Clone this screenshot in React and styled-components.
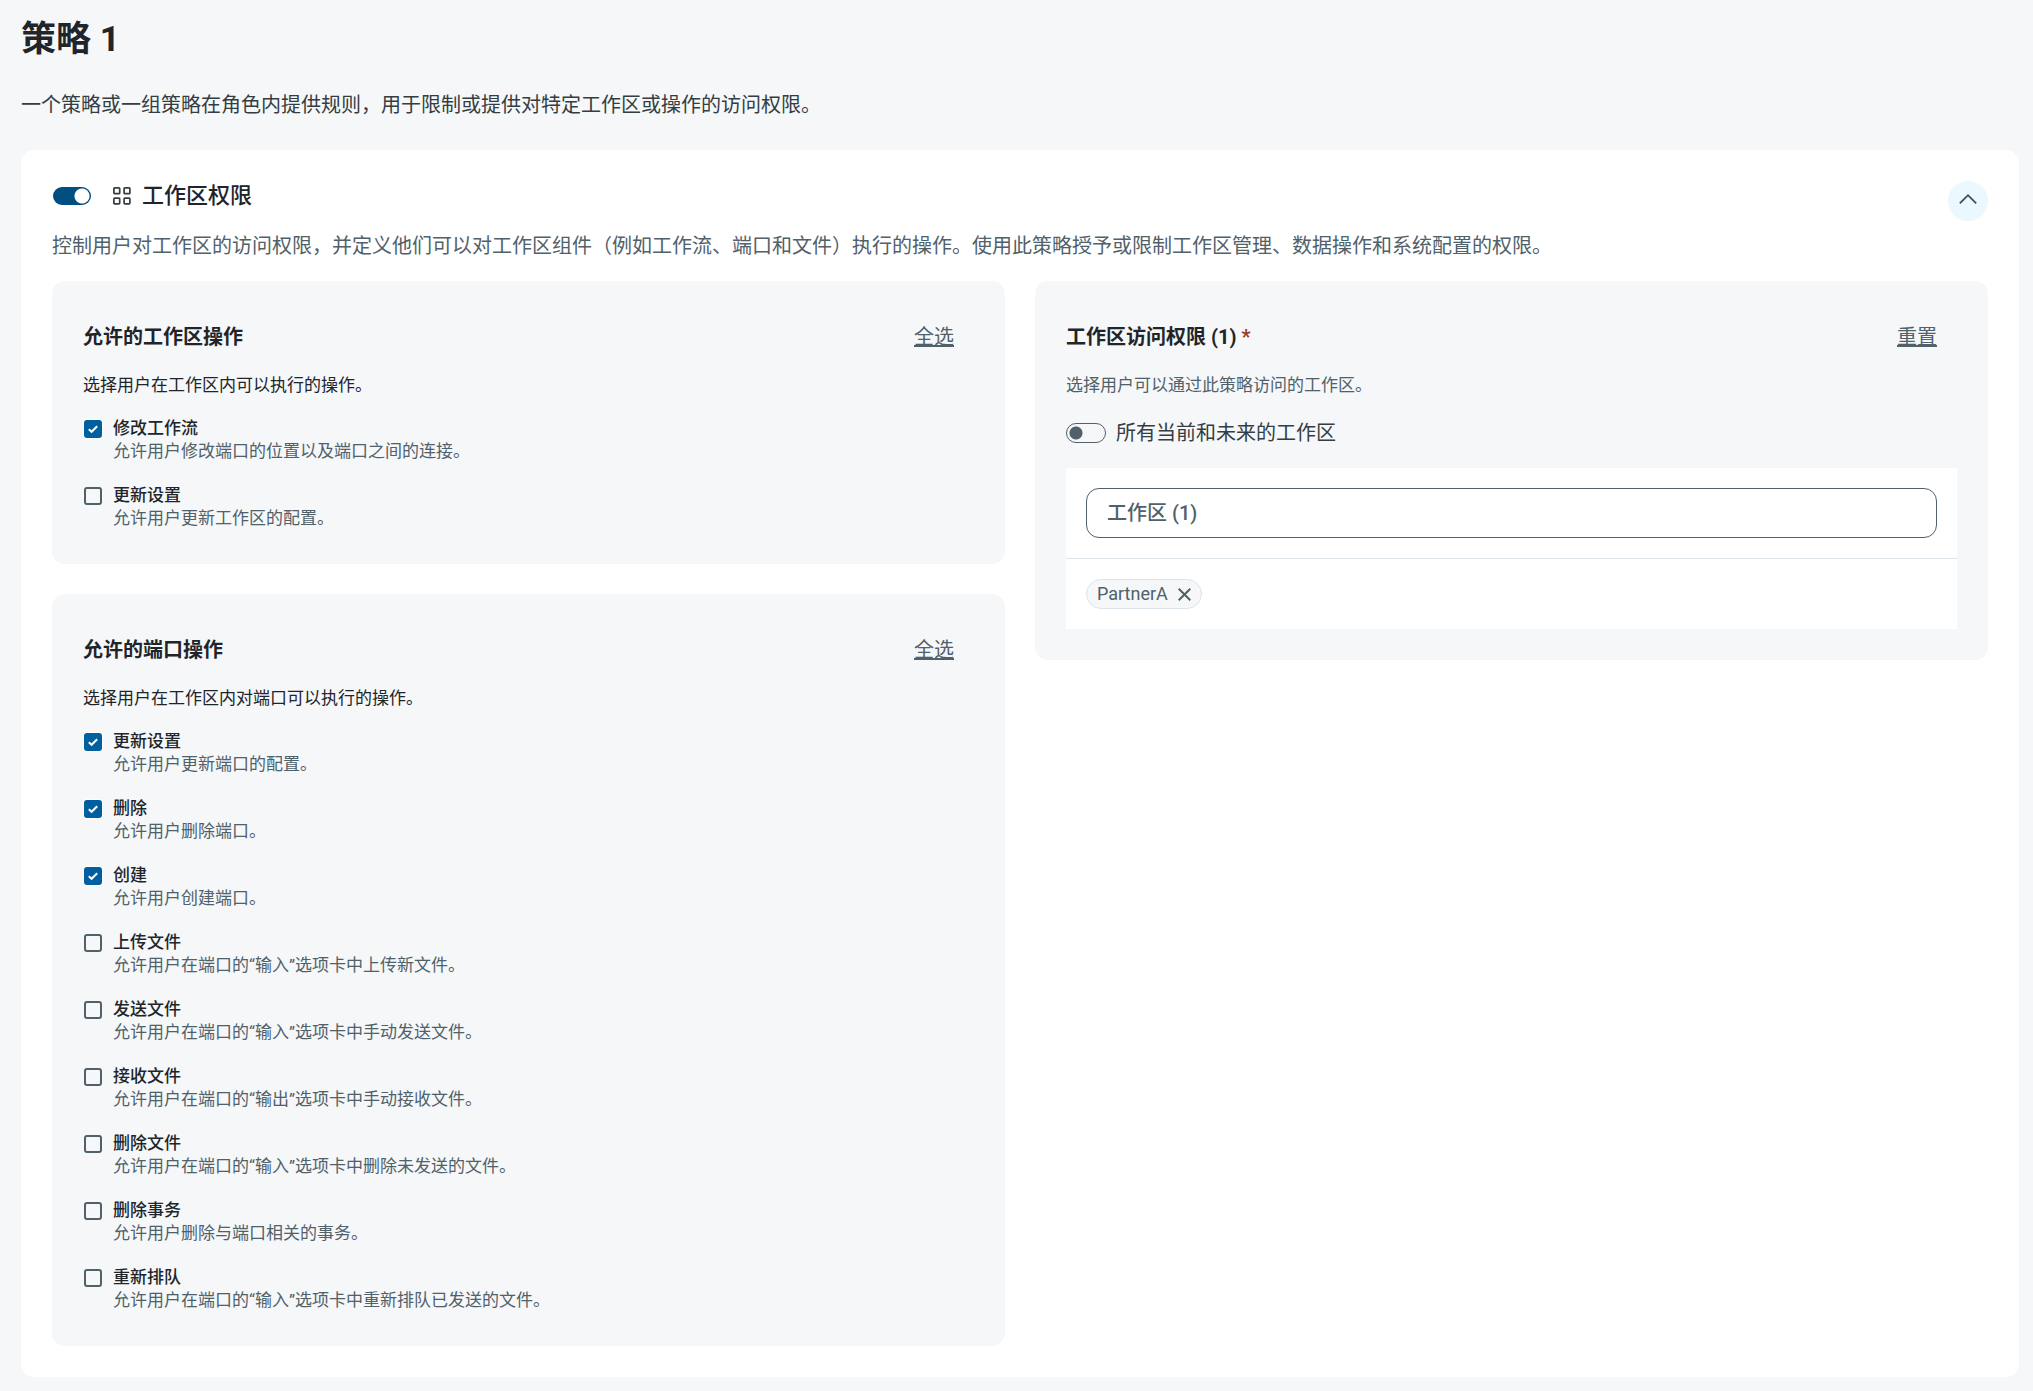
import React, { useState } from "react";
import styled, { createGlobalStyle } from "styled-components";

const GlobalStyles = createGlobalStyle`
  * {
    box-sizing: border-box;
  }

  body {
    margin: 0;
    background: #f5f7f9;
    color: #212529;
    font-family: Roboto, "Noto Sans CJK SC", sans-serif;
    font-size: 20px;
    line-height: 30px;
  }

  h1, h2, h3, p, ul {
    margin: 0;
    padding: 0;
  }

  button, input {
    font: inherit;
    color: inherit;
  }
`;

const Page = styled.main`
  padding: 18px 14px 14px 21px;
`;

const Title = styled.h1`
  font-size: 35px;
  line-height: 44px;
  font-weight: 700;
`;

const Intro = styled.p`
  margin-top: 28px;
  color: #343d42;
`;

/* 흰색 정책 카드 */
const Card = styled.section`
  margin-top: 30px;
  padding: 31px;
  border-radius: 13px;
  background: #fff;
`;

const CardHeader = styled.header`
  display: flex;
  justify-content: space-between;
  height: 50px;
`;

const CardTitle = styled.div`
  display: flex;
  align-items: center;
  height: 30px;

  svg {
    margin: 0 11px 0 21px;
  }
`;

const CardName = styled.h2`
  font-size: 22px;
  line-height: 30px;
  font-weight: 500;
`;

const CollapseButton = styled.button`
  display: flex;
  align-items: center;
  justify-content: center;
  width: 40px;
  height: 40px;
  padding: 0;
  border: 0;
  border-radius: 50%;
  background: #ebf8ff;
  cursor: pointer;
`;

const CardText = styled.p`
  color: #50616a;
`;

const Columns = styled.div`
  display: grid;
  grid-template-columns: 1fr 1fr;
  align-items: start;
  gap: 30px;
  margin-top: 20px;
`;

const Column = styled.div`
  display: grid;
  gap: 30px;
`;

const Panel = styled.section`
  padding: 41px 31px 31px;
  border-radius: 13px;
  background: #f5f7f9;
`;

const PanelHeader = styled.div`
  display: flex;
  justify-content: space-between;
  padding-right: 20px;
`;

const PanelTitle = styled.h3`
  font-size: 20px;
  font-weight: 700;
`;

const Required = styled.span`
  color: #9b3a24;
`;

const LinkButton = styled.button`
  padding: 0;
  border: 0;
  background: none;
  color: #50616a;
  text-decoration: underline;
  text-decoration-thickness: 2px;
  cursor: pointer;
`;

const PanelText = styled.p`
  margin-top: 21px;
  font-size: 17px;
  line-height: 24px;
  color: ${({ $muted }) => ($muted ? "#50616a" : "#212529")};
`;

/* 체크박스 목록 */
const OptionList = styled.ul`
  display: grid;
  gap: 21px;
  margin-top: 20px;
  padding: 0 0 3px 1px;
  list-style: none;
`;

const Option = styled.li`
  display: grid;
  grid-template-columns: 18px 1fr;
  column-gap: 11px;
  font-size: 17px;
  line-height: 23px;
`;

const Checkbox = styled.input.attrs({ type: "checkbox" })`
  appearance: none;
  width: 18px;
  height: 18px;
  margin: 3px 0 0;
  border: 2px solid #50616a;
  border-radius: 3px;
  cursor: pointer;

  &:checked {
    border-color: #005f9e;
    box-shadow: 0 0 0 1px #fff;
    background: #005f9e
      url("data:image/svg+xml,%3Csvg xmlns='http://www.w3.org/2000/svg' viewBox='0 0 14 14'%3E%3Cpath d='M2.8 7.2 5.6 9.8 11.2 4.2' fill='none' stroke='white' stroke-width='2'/%3E%3C/svg%3E")
      center / 14px no-repeat;
  }
`;

const OptionName = styled.label`
  justify-self: start;
  font-weight: 500;
  cursor: pointer;
`;

const OptionText = styled.p`
  grid-column: 2;
  color: #50616a;
`;

/* 스위치 */
const Switch = styled.input.attrs({ type: "checkbox", role: "switch" })`
  appearance: none;
  flex: none;
  width: 40px;
  height: 20px;
  margin: 0;
  border: 1px solid #50616a;
  border-radius: 10px;
  background: radial-gradient(circle at 9px 9px, #50616a 6px, transparent 7px);
  cursor: pointer;

  &:checked {
    border-color: transparent;
    background: radial-gradient(circle at 29px 9px, #fff 7px, #004f80 8px) padding-box;
  }
`;

const SwitchRow = styled.label`
  display: flex;
  align-items: center;
  gap: 10px;
  margin-top: 21px;
  color: #343d42;
`;

/* 작업공간 선택 박스 */
const Picker = styled.div`
  margin-top: 20px;
  background: #fff;
`;

const PickerTop = styled.div`
  padding: 20px;
  border-bottom: 1px solid #dde4ea;
`;

const PickerInput = styled.input`
  display: block;
  width: 100%;
  height: 50px;
  padding: 0 20px;
  border: 1px solid #50616a;
  border-radius: 13px;
  background: #fff;
  font-weight: 500;

  &::placeholder {
    color: #50616a;
    opacity: 1;
  }
`;

const TagList = styled.div`
  display: flex;
  min-height: 70px;
  padding: 20px;
`;

const Tag = styled.span`
  display: flex;
  align-items: center;
  gap: 10px;
  height: 30px;
  padding: 0 10px;
  border: 1px solid #dde4ea;
  border-radius: 15px;
  background: #f5f7f9;
  color: #50616a;
  font-size: 18px;
`;

const TagRemove = styled.button`
  display: flex;
  padding: 0;
  border: 0;
  background: none;
  cursor: pointer;
`;

const workspaceOptions = [
  { id: "ws-flow", name: "修改工作流", text: "允许用户修改端口的位置以及端口之间的连接。", checked: true },
  { id: "ws-settings", name: "更新设置", text: "允许用户更新工作区的配置。" },
];

const portOptions = [
  { id: "port-settings", name: "更新设置", text: "允许用户更新端口的配置。", checked: true },
  { id: "port-delete", name: "删除", text: "允许用户删除端口。", checked: true },
  { id: "port-create", name: "创建", text: "允许用户创建端口。", checked: true },
  { id: "port-upload", name: "上传文件", text: "允许用户在端口的“输入”选项卡中上传新文件。" },
  { id: "port-send", name: "发送文件", text: "允许用户在端口的“输入”选项卡中手动发送文件。" },
  { id: "port-receive", name: "接收文件", text: "允许用户在端口的“输出”选项卡中手动接收文件。" },
  { id: "port-delete-file", name: "删除文件", text: "允许用户在端口的“输入”选项卡中删除未发送的文件。" },
  { id: "port-delete-tx", name: "删除事务", text: "允许用户删除与端口相关的事务。" },
  { id: "port-requeue", name: "重新排队", text: "允许用户在端口的“输入”选项卡中重新排队已发送的文件。" },
];

const GridIcon = () => (
  <svg width="18" height="18" viewBox="0 0 18 18" fill="none" stroke="#343d42" strokeWidth="1.7" aria-hidden="true">
    <rect x="0.9" y="0.9" width="5.8" height="5.8" rx="0.8" />
    <rect x="11.1" y="0.9" width="5.8" height="5.8" rx="0.8" />
    <rect x="0.9" y="11.1" width="5.8" height="5.8" rx="0.8" />
    <rect x="11.1" y="11.1" width="5.8" height="5.8" rx="0.8" />
  </svg>
);

const ChevronUp = () => (
  <svg width="20" height="20" viewBox="0 0 20 20" fill="none" stroke="#414f57" strokeWidth="1.8" aria-hidden="true">
    <path d="M1.8 12.4 10 4.2l8.2 8.2" />
  </svg>
);

const CloseIcon = () => (
  <svg width="13" height="13" viewBox="0 0 13 13" fill="none" stroke="#50616a" strokeWidth="2" aria-hidden="true">
    <path d="M.7.7l11.6 11.6M12.3.7.7 12.3" />
  </svg>
);

const OptionPanel = ({ title, text, items }) => {
  const [options, setOptions] = useState(items);

  const toggle = (id) =>
    setOptions(options.map((v) => (v.id === id ? { ...v, checked: !v.checked } : v)));

  const selectAll = () => setOptions(options.map((v) => ({ ...v, checked: true })));

  return (
    <Panel>
      <PanelHeader>
        <PanelTitle>{title}</PanelTitle>
        <LinkButton type="button" onClick={selectAll}>
          全选
        </LinkButton>
      </PanelHeader>
      <PanelText>{text}</PanelText>
      <OptionList>
        {options.map((v) => (
          <Option key={v.id}>
            <Checkbox id={v.id} checked={!!v.checked} onChange={() => toggle(v.id)} />
            <OptionName htmlFor={v.id}>{v.name}</OptionName>
            <OptionText>{v.text}</OptionText>
          </Option>
        ))}
      </OptionList>
    </Panel>
  );
};

const AccessPanel = () => {
  const [tags, setTags] = useState(["PartnerA"]);

  return (
    <Panel>
      <PanelHeader>
        <PanelTitle>
          工作区访问权限 ({tags.length}) <Required>*</Required>
        </PanelTitle>
        <LinkButton type="button" onClick={() => setTags([])}>
          重置
        </LinkButton>
      </PanelHeader>
      <PanelText $muted>选择用户可以通过此策略访问的工作区。</PanelText>
      <SwitchRow>
        <Switch />
        所有当前和未来的工作区
      </SwitchRow>
      <Picker>
        <PickerTop>
          <PickerInput type="text" aria-label="工作区" placeholder={`工作区 (${tags.length})`} />
        </PickerTop>
        <TagList>
          {tags.map((v) => (
            <Tag key={v}>
              {v}
              <TagRemove type="button" onClick={() => setTags(tags.filter((t) => t !== v))}>
                <CloseIcon />
              </TagRemove>
            </Tag>
          ))}
        </TagList>
      </Picker>
    </Panel>
  );
};

const App = () => {
  const [open, setOpen] = useState(true);

  return (
    <>
      <GlobalStyles />
      <Page>
        <Title>策略 1</Title>
        <Intro>一个策略或一组策略在角色内提供规则，用于限制或提供对特定工作区或操作的访问权限。</Intro>

        <Card>
          <CardHeader>
            <CardTitle>
              <Switch id="policy" defaultChecked aria-labelledby="policy-name" />
              <GridIcon />
              <CardName id="policy-name">工作区权限</CardName>
            </CardTitle>
            <CollapseButton type="button" aria-expanded={open} onClick={() => setOpen(!open)}>
              <ChevronUp />
            </CollapseButton>
          </CardHeader>
          <CardText>
            控制用户对工作区的访问权限，并定义他们可以对工作区组件（例如工作流、端口和文件）执行的操作。使用此策略授予或限制工作区管理、数据操作和系统配置的权限。
          </CardText>

          {open && (
            <Columns>
              <Column>
                <OptionPanel
                  title="允许的工作区操作"
                  text="选择用户在工作区内可以执行的操作。"
                  items={workspaceOptions}
                />
                <OptionPanel
                  title="允许的端口操作"
                  text="选择用户在工作区内对端口可以执行的操作。"
                  items={portOptions}
                />
              </Column>
              <AccessPanel />
            </Columns>
          )}
        </Card>
      </Page>
    </>
  );
};

export default App;
